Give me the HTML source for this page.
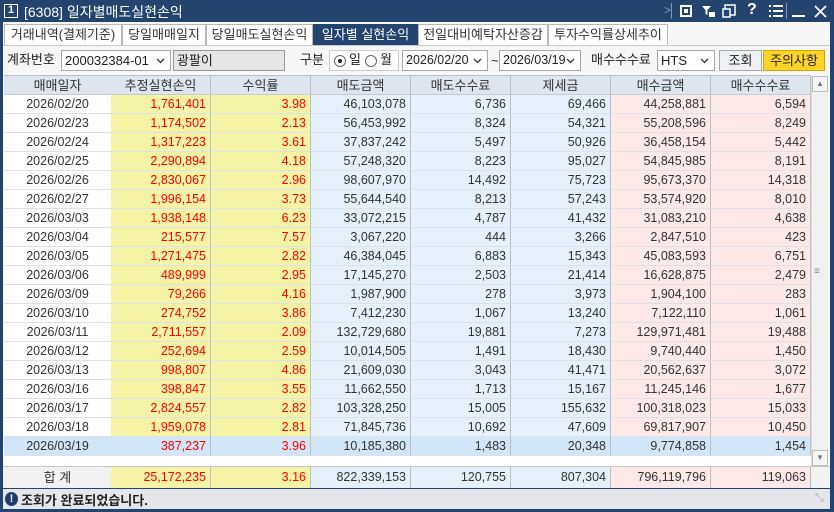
<!DOCTYPE html>
<html><head><meta charset="utf-8">
<style>
*{margin:0;padding:0;box-sizing:border-box}
body{width:834px;height:512px;overflow:hidden;background:#23446f;font-family:"Liberation Sans","Noto Sans CJK KR",sans-serif;font-size:12px;color:#222;position:relative}
.a{position:absolute}
.title{left:0;top:0;width:834px;height:22px;color:#fff;font-size:14px}
.main{left:3px;top:22px;width:827px;height:487px;background:#f7f7f7}
.tab{top:2px;height:21px;border:1px solid #b8b8b8;border-bottom:none;background:#fff;color:#333;font-size:13px;text-align:center;line-height:19px}
.tab.on{background:#23446f;color:#fff;border-color:#23446f}
.box{height:21px;border:1px solid #a8a8a8;background:#fff;font-size:13px;line-height:19px;padding-left:3px;overflow:hidden}
.chev{position:absolute;right:5px;top:7px}
.lbl{font-size:13px;line-height:21px}
.hdr{top:54px;height:19px;background:#dfe5ee;border-right:1px solid #b6bfca;border-bottom:1px solid #c6ccd4;text-align:center;font-size:13px;line-height:19px;color:#333}
.cell{border-right:1px solid #b6bfca;border-bottom:1px solid #dde2e8;text-align:right;padding-right:4px;font-size:12.5px;color:#333}
.r{color:#f00}
</style></head><body>
<div class="a title">
 <div class="a" style="left:4px;top:4px;width:14px;height:14px;border:1.5px solid #fff;font-size:11px;line-height:11px;text-align:center;font-weight:bold">1</div>
 <div class="a" style="left:24px;top:2px">[6308] 일자별매도실현손익</div>
 <div class="a" style="left:664px;top:3px;font-size:12px;color:#7f96b8">&gt;</div>
 <div class="a" style="left:671px;top:3px;width:1px;height:16px;background:#7f96b8"></div>
 <div class="a" style="left:680px;top:5px;width:12px;height:12px;border:2px solid #fff"><div class="a" style="left:2px;top:2px;width:4px;height:4px;background:#fff"></div></div>
 <svg class="a" style="left:701px;top:4px" width="14" height="14"><path d="M1 2h9l-3.5 4v5l-2-1V6z" fill="#fff"/><rect x="8" y="8" width="6" height="5" fill="#fff"/></svg>
 <svg class="a" style="left:722px;top:4px" width="14" height="14"><rect x="3" y="1" width="10" height="10" fill="none" stroke="#fff" stroke-width="1.5"/><rect x="1" y="5" width="7" height="8" fill="#23446f" stroke="#fff" stroke-width="1.5"/></svg>
 <div class="a" style="left:747px;top:1px;font-size:16px;font-weight:bold">?</div>
 <svg class="a" style="left:769px;top:5px" width="14" height="12"><path d="M0 1h2M4 1h10M0 6h2M4 6h10M0 11h2M4 11h10" stroke="#fff" stroke-width="2"/></svg>
 <div class="a" style="left:786px;top:3px;width:1px;height:16px;background:#7f96b8"></div>
 <div class="a" style="left:792px;top:15px;width:13px;height:2px;background:#fff"></div>
 <svg class="a" style="left:814px;top:5px" width="13" height="13"><path d="M1 1l11 11M12 1L1 12" stroke="#fff" stroke-width="1.8"/></svg>
</div>
<div class="a main">
 <div class="a tab" style="left:1px;width:118px">거래내역(결제기준)</div>
 <div class="a tab" style="left:119px;width:84px">당일매매일지</div>
 <div class="a tab" style="left:203px;width:107px">당일매도실현손익</div>
 <div class="a tab on" style="left:310px;width:105px">일자별 실현손익</div>
 <div class="a tab" style="left:415px;width:130px">전일대비예탁자산증감</div>
 <div class="a tab" style="left:545px;width:120px">투자수익률상세추이</div>
 <div class="a" style="left:0;top:23px;width:827px;height:1px;background:#c8c8c8"></div>

 <div class="a lbl" style="left:4px;top:27px">계좌번호</div>
 <div class="a box" style="left:58px;top:28px;width:110px">200032384-01<svg class="chev" width="9" height="6"><path d="M1 1l3.5 3.5L8 1" stroke="#333" stroke-width="1.3" fill="none"/></svg></div>
 <div class="a box" style="left:170px;top:28px;width:112px;background:#e6e6e6;border-color:#999">광팔이</div>
 <div class="a lbl" style="left:297px;top:27px">구분</div>
 <div class="a" style="left:326px;top:28px;width:70px;height:21px;border:1px solid #ccc;background:#fff"></div>
 <div class="a" style="left:331px;top:33px;width:12px;height:12px;border:1px solid #666;border-radius:50%"><div class="a" style="left:3px;top:3px;width:4px;height:4px;background:#222;border-radius:50%"></div></div>
 <div class="a lbl" style="left:346px;top:27px">일</div>
 <div class="a" style="left:362px;top:33px;width:12px;height:12px;border:1px solid #666;border-radius:50%"></div>
 <div class="a lbl" style="left:377px;top:27px">월</div>
 <div class="a box" style="left:399px;top:28px;width:86px;font-size:12.5px">2026/02/20<svg class="chev" width="9" height="6"><path d="M1 1l3.5 3.5L8 1" stroke="#333" stroke-width="1.3" fill="none"/></svg></div>
 <div class="a lbl" style="left:488px;top:28px">~</div>
 <div class="a box" style="left:496px;top:28px;width:82px;font-size:12.5px">2026/03/19<svg class="chev" width="9" height="6"><path d="M1 1l3.5 3.5L8 1" stroke="#333" stroke-width="1.3" fill="none"/></svg></div>
 <div class="a lbl" style="left:588px;top:27px">매수수수료</div>
 <div class="a box" style="left:654px;top:28px;width:58px">HTS<svg class="chev" width="9" height="6"><path d="M1 1l3.5 3.5L8 1" stroke="#333" stroke-width="1.3" fill="none"/></svg></div>
 <div class="a box" style="left:716px;top:28px;width:43px;background:#eef0f3;text-align:center;padding:0">조회</div>
 <div class="a box" style="left:760px;top:28px;width:62px;background:#ffd42a;border-color:#d4a800;text-align:center;padding:0">주의사항</div>

 <div class="a" style="left:1px;top:53px;width:807px;height:392px;background:#fff;border-top:1px solid #b6bfca"></div>
 <div id="g"></div>
 <div class="a" style="left:808px;top:54px;width:17px;height:391px;background:#f0f0f0;border-left:1px solid #ddd"></div>
 <div class="a" style="left:809px;top:54px;width:16px;height:16px;border:1px solid #bbb;background:#f6f6f6;font-size:8px;text-align:center;line-height:14px;color:#777">▲</div>
 <div class="a" style="left:809px;top:428px;width:16px;height:16px;border:1px solid #bbb;background:#f6f6f6;font-size:8px;text-align:center;line-height:14px;color:#777">▼</div>
 <div class="a" style="left:811px;top:244px;font-size:10px;color:#888">≡</div>
 <div class="a" style="left:0;top:444px;width:827px;height:1px;background:#c6c6c6"></div>
 <div class="a" style="left:0;top:445px;width:827px;height:21px;background:#f2f2f2"></div>
 <div id="t"></div>
 <div class="a" style="left:0;top:466px;width:827px;height:1px;background:#23446f"></div>
 <div class="a" style="left:0;top:467px;width:827px;height:20px;background:#e4e6ea"></div>
 <div class="a" style="left:2px;top:470px;width:13px;height:14px;background:#1e3f6e;border-radius:50%;color:#fff;font-size:11px;font-weight:bold;text-align:center;line-height:14px">!</div>
 <div class="a" style="left:18px;top:468px;font-size:13px;font-weight:bold;color:#222">조회가 완료되었습니다.</div>
 <div class="a" style="left:812px;top:470px;font-size:11px;color:#aaa">⤡</div>
</div>
<script>
var cols=[[1,108],[108,100],[208,100],[308,100],[408,100],[508,100],[608,100],[708,100]];
var bg=["#fff","#f4f3a6","#f4f3a6","#e6f0fa","#e6f0fa","#e6f0fa","#fde9e8","#fde9e8"];
var heads=["매매일자","추정실현손익","수익률","매도금액","매도수수료","제세금","매수금액","매수수수료"];
var rows=`2026/02/20|1,761,401|3.98|46,103,078|6,736|69,466|44,258,881|6,594
2026/02/23|1,174,502|2.13|56,453,992|8,324|54,321|55,208,596|8,249
2026/02/24|1,317,223|3.61|37,837,242|5,497|50,926|36,458,154|5,442
2026/02/25|2,290,894|4.18|57,248,320|8,223|95,027|54,845,985|8,191
2026/02/26|2,830,067|2.96|98,607,970|14,492|75,723|95,673,370|14,318
2026/02/27|1,996,154|3.73|55,644,540|8,213|57,243|53,574,920|8,010
2026/03/03|1,938,148|6.23|33,072,215|4,787|41,432|31,083,210|4,638
2026/03/04|215,577|7.57|3,067,220|444|3,266|2,847,510|423
2026/03/05|1,271,475|2.82|46,384,045|6,883|15,343|45,083,593|6,751
2026/03/06|489,999|2.95|17,145,270|2,503|21,414|16,628,875|2,479
2026/03/09|79,266|4.16|1,987,900|278|3,973|1,904,100|283
2026/03/10|274,752|3.86|7,412,230|1,067|13,240|7,122,110|1,061
2026/03/11|2,711,557|2.09|132,729,680|19,881|7,273|129,971,481|19,488
2026/03/12|252,694|2.59|10,014,505|1,491|18,430|9,740,440|1,450
2026/03/13|998,807|4.86|21,609,030|3,043|41,471|20,562,637|3,072
2026/03/16|398,847|3.55|11,662,550|1,713|15,167|11,245,146|1,677
2026/03/17|2,824,557|2.82|103,328,250|15,005|155,632|100,318,023|15,033
2026/03/18|1,959,078|2.81|71,845,736|10,692|47,609|69,817,907|10,450
2026/03/19|387,237|3.96|10,185,380|1,483|20,348|9,774,858|1,454`.split("\n");
var h="";
cols.forEach(function(c,i){h+='<div class="a hdr" style="left:'+c[0]+'px;width:'+c[1]+'px">'+heads[i]+'</div>';});
var rh=19;
rows.forEach(function(r,j){var v=r.split("|");var top=73+j*rh;var sel=j==18;
 cols.forEach(function(c,i){var b=sel?"#d2e6f8":bg[i];
  h+='<div class="a cell'+((i==1||i==2)?' r':'')+'" style="left:'+c[0]+'px;width:'+c[1]+'px;top:'+top+'px;height:'+rh+'px;line-height:'+(rh-1)+'px;background:'+b+';'+(i==0?'text-align:center;padding:0;':'')+'">'+v[i]+'</div>';});});
document.getElementById("g").outerHTML=h;
var tv=["합 계","25,172,235","3.16","822,339,153","120,755","807,304","796,119,796","119,063"];
var t="";
cols.forEach(function(c,i){t+='<div class="a cell'+((i==1||i==2)?' r':'')+'" style="left:'+c[0]+'px;width:'+c[1]+'px;top:445px;height:21px;line-height:21px;border-bottom:none;background:'+(i==0?'#f2f2f2':bg[i])+';'+(i==0?'text-align:center;padding:0;font-size:13px;':'')+'">'+tv[i]+'</div>';});
document.getElementById("t").outerHTML=t;
</script>
</body></html>
